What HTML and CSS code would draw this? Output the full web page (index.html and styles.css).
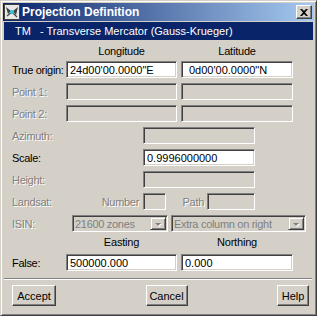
FILE: index.html
```html
<!DOCTYPE html>
<html lang="en">
<head>
    <meta charset="UTF-8">
    <meta name="viewport" content="width=device-width, initial-scale=1.0">
    <title>Projection Definition</title>
    <link rel="stylesheet" href="styles.css">
</head>
<body>
    <div class="window">
        <div class="titlebar">
            <svg class="app-icon" width="16" height="16" viewBox="0 0 16 16">
                <rect x="0.5" y="0.5" width="15" height="15" fill="#e8e8e8" stroke="#404040"/>
                <path d="M2 3 L7 7 L4 10 Z" fill="#404040"/>
                <path d="M14 3 L9 7 L12 11 Z" fill="#404040"/>
                <path d="M3 12 L8 8 L13 13" fill="none" stroke="#404040" stroke-width="1.2"/>
                <circle cx="8" cy="8" r="2" fill="#20c8d8"/>
            </svg>
            <span class="title">Projection Definition</span>
            <span class="close-btn">
                <svg width="8" height="7" viewBox="0 0 8 7">
                    <path d="M0 0 L2 0 L4 2 L6 0 L8 0 L5 3.5 L8 7 L6 7 L4 5 L2 7 L0 7 L3 3.5 Z" fill="#000"/>
                </svg>
            </span>
        </div>

        <div class="proj-name"><span class="code">TM</span>- Transverse Mercator (Gauss-Krueger)</div>

        <div class="form">
            <div class="heads heads-top">
                <span class="col-head first">Longitude</span>
                <span class="col-head second">Latitude</span>
            </div>
            <div class="row">
                <label>True origin:</label>
                <input class="field first" type="text" value="24d00'00.0000&quot;E">
                <input class="field second indent" type="text" value="0d00'00.0000&quot;N">
            </div>
            <div class="row">
                <label class="disabled">Point 1:</label>
                <input class="field first" type="text" disabled>
                <input class="field second" type="text" disabled>
            </div>
            <div class="row">
                <label class="disabled">Point 2:</label>
                <input class="field first" type="text" disabled>
                <input class="field second" type="text" disabled>
            </div>
            <div class="row">
                <label class="disabled wide">Azimuth:</label>
                <input class="field mid" type="text" disabled>
            </div>
            <div class="row">
                <label class="wide">Scale:</label>
                <input class="field mid" type="text" value="0.9996000000">
            </div>
            <div class="row">
                <label class="disabled wide">Height:</label>
                <input class="field mid" type="text" disabled>
            </div>
            <div class="row">
                <label class="disabled landsat">Landsat:</label>
                <span class="disabled number-label">Number</span>
                <input class="field number" type="text" disabled>
                <span class="disabled path-label">Path</span>
                <input class="field path" type="text" disabled>
            </div>
            <div class="row">
                <label class="disabled isin">ISIN:</label>
                <div class="combo zones">
                    <span class="combo-text">21600 zones</span>
                    <span class="combo-btn"><span class="arrow"></span></span>
                </div>
                <div class="combo extra">
                    <span class="combo-text">Extra column on right</span>
                    <span class="combo-btn"><span class="arrow"></span></span>
                </div>
            </div>
            <div class="heads heads-bottom">
                <span class="col-head first">Easting</span>
                <span class="col-head second">Northing</span>
            </div>
            <div class="row row-false">
                <label>False:</label>
                <input class="field first" type="text" value="500000.000">
                <input class="field second" type="text" value="0.000">
            </div>
        </div>

        <div class="separator"></div>

        <div class="buttons">
            <button class="btn accept">Accept</button>
            <button class="btn cancel">Cancel</button>
            <button class="btn help">Help</button>
        </div>
    </div>
</body>
</html>
```

FILE: styles.css
```css
body {
    margin: 0;
    padding: 0;
    background-color: #d4d0c8;
    font-family: "Liberation Sans", Arial, sans-serif;
    font-size: 11px;
    color: #000;
}
.window {
    width: 317px;
    height: 316px;
    box-sizing: border-box;
    background: #d4d0c8;
    border: 1px solid;
    border-color: #d4d0c8 #404040 #404040 #d4d0c8;
    box-shadow: inset 1px 1px #fff, inset -1px -1px #808080;
    padding: 2px 2px 2px 2px;
}
.titlebar {
    height: 18px;
    display: flex;
    align-items: center;
    background: linear-gradient(to right, #0a246a, #a6caf0);
    padding-left: 1px;
}
.app-icon {
    flex: 0 0 16px;
}
.title {
    color: #fff;
    font-weight: bold;
    font-size: 12px;
    margin-left: 2px;
    flex: 1;
}
.close-btn {
    width: 16px;
    height: 14px;
    box-sizing: border-box;
    margin-right: 2px;
    background: #d4d0c8;
    border: 1px solid;
    border-color: #fff #404040 #404040 #fff;
    box-shadow: inset -1px -1px #808080;
    display: flex;
    align-items: center;
    justify-content: center;
    padding-right: 1px;
}
.proj-name {
    height: 18px;
    line-height: 18px;
    margin: 1px 1px 0 1px;
    padding-left: 11px;
    background: #0a246a;
    color: #fff;
    white-space: pre;
}
.code {
    display: inline-block;
    width: 25px;
}
.form {
    padding-left: 9px;
}
.heads {
    display: flex;
    height: 13px;
    line-height: 13px;
    padding-left: 54px;
}
.heads-top {
    margin-top: 5px;
}
.heads-bottom {
    margin-top: 4px;
}
.col-head {
    text-align: center;
    letter-spacing: -0.2px;
}
.col-head.first {
    width: 111px;
}
.col-head.second {
    width: 112px;
    margin-left: 4px;
}
.row {
    display: flex;
    align-items: center;
    height: 17px;
    margin-top: 5px;
}
.heads-top + .row {
    margin-top: 3px;
}
.row-false {
    margin-top: 5px;
}
label {
    flex: 0 0 54px;
    white-space: nowrap;
    letter-spacing: -0.3px;
}
label.wide {
    flex-basis: 131px;
}
label.landsat {
    flex-basis: 66px;
}
label.isin {
    flex-basis: 60px;
}
.disabled {
    color: #808080;
    text-shadow: 1px 1px 0 #fff;
}
.field {
    height: 17px;
    box-sizing: border-box;
    margin: 0;
    padding: 0 0 0 3px;
    font-family: "Liberation Sans", Arial, sans-serif;
    font-size: 11px;
    color: #000;
    background: #fff;
    border: 1px solid;
    border-color: #808080 #fff #fff #808080;
    box-shadow: inset 1px 1px #404040, inset -1px -1px #d4d0c8;
    outline: none;
}
.field:disabled {
    background: #d4d0c8;
}
.field.indent {
    padding-left: 7px;
}
.field.first {
    width: 111px;
}
.field.second {
    width: 112px;
    margin-left: 4px;
}
.field.mid {
    width: 112px;
}
.number-label {
    width: 61px;
    text-align: right;
    margin-right: 4px;
    letter-spacing: -0.3px;
}
.field.number {
    width: 23px;
}
.path-label {
    width: 41px;
    box-sizing: border-box;
    text-align: right;
    padding-right: 3px;
    letter-spacing: -0.3px;
}
.field.path {
    width: 48px;
}
.combo {
    height: 17px;
    box-sizing: border-box;
    display: flex;
    align-items: center;
    background: #d4d0c8;
    border: 1px solid;
    border-color: #808080 #fff #fff #808080;
    box-shadow: inset 1px 1px #404040, inset -1px -1px #d4d0c8;
    padding: 1px;
}
.combo.zones {
    width: 96px;
}
.combo.extra {
    width: 135px;
    margin-left: 3px;
}
.combo-text {
    flex: 1;
    padding-left: 1px;
    color: #808080;
    white-space: nowrap;
    overflow: hidden;
    letter-spacing: -0.3px;
}
.combo-btn {
    width: 16px;
    height: 13px;
    box-sizing: border-box;
    border: 1px solid;
    border-color: #d4d0c8 #404040 #404040 #d4d0c8;
    box-shadow: inset 1px 1px #fff, inset -1px -1px #808080;
    display: flex;
    align-items: center;
    justify-content: center;
}
.arrow {
    width: 0;
    height: 0;
    border-left: 3px solid transparent;
    border-right: 3px solid transparent;
    border-top: 3px solid #808080;
    filter: drop-shadow(1px 1px 0 #fff);
    margin-top: 1px;
}
.separator {
    height: 0;
    margin: 7px 2px 0 1px;
    border-top: 1px solid #808080;
    border-bottom: 1px solid #fff;
}
.buttons {
    display: flex;
    justify-content: space-between;
    padding: 0 5px 0 9px;
    margin-top: 5px;
}
.btn {
    height: 21px;
    box-sizing: border-box;
    padding: 0;
    font-family: "Liberation Sans", Arial, sans-serif;
    font-size: 11px;
    color: #000;
    background: #d4d0c8;
    border: 1px solid;
    border-color: #fff #404040 #404040 #fff;
    box-shadow: inset -1px -1px #808080;
}
.btn.accept {
    width: 44px;
}
.btn.cancel {
    width: 42px;
}
.btn.help {
    width: 32px;
}
```
